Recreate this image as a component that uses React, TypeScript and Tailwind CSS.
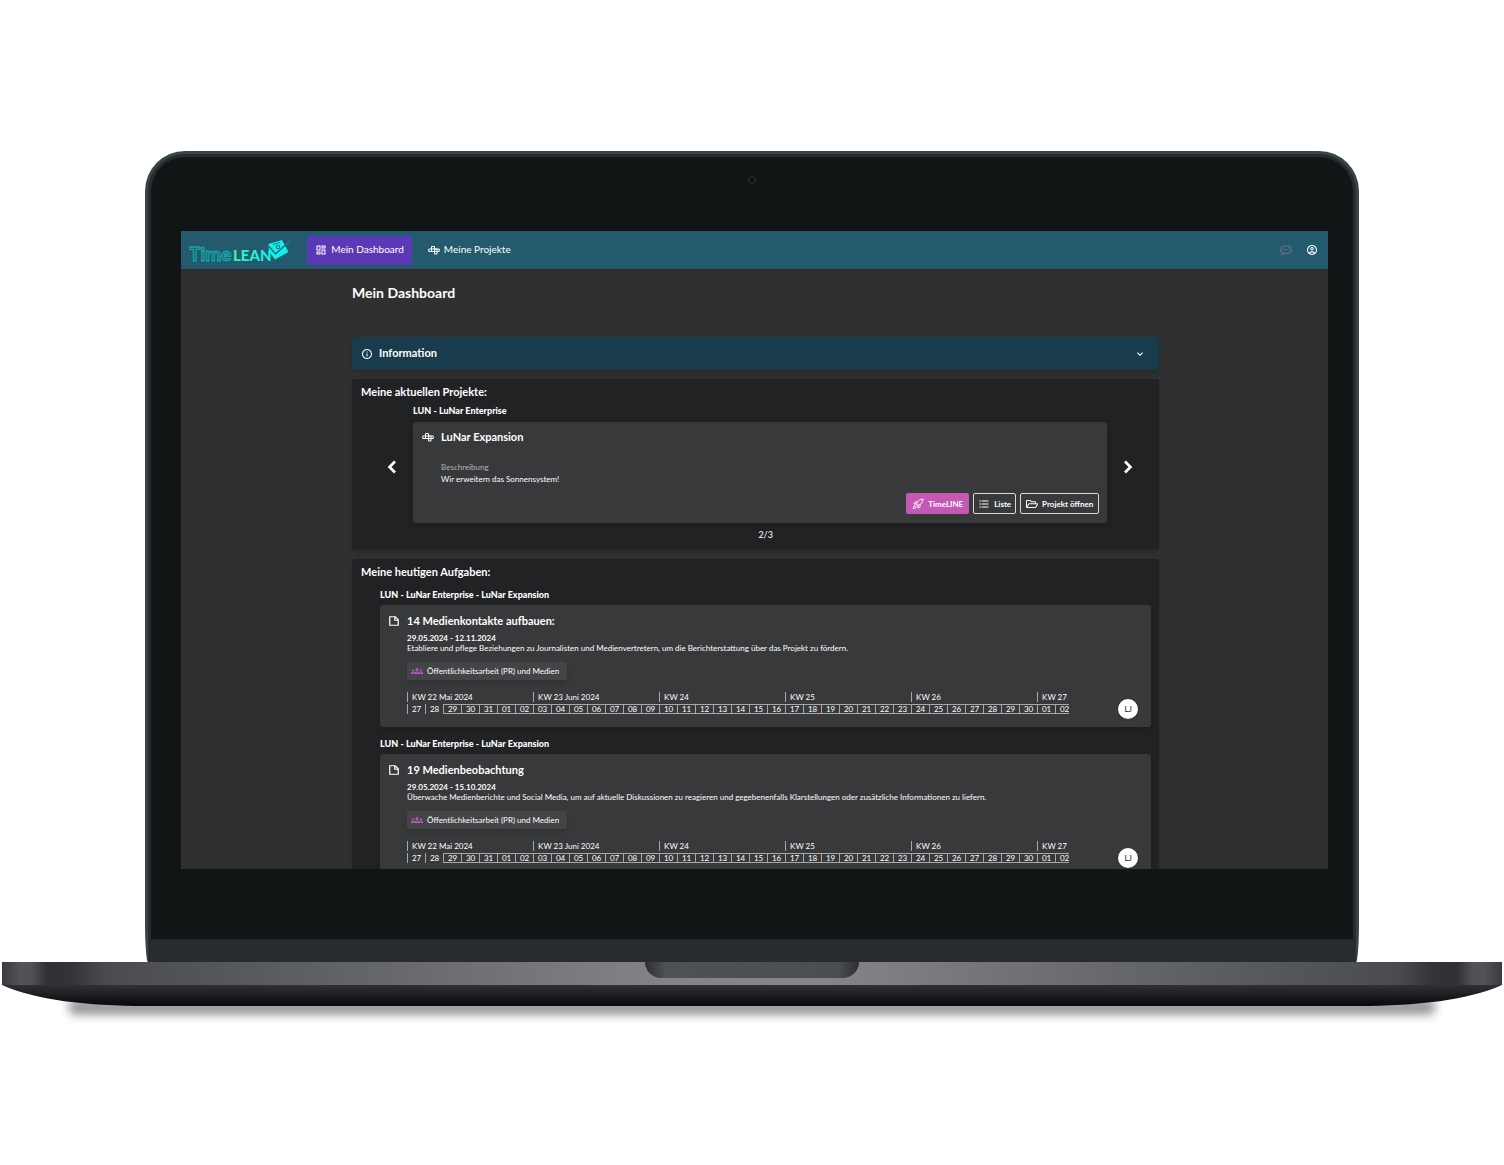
import { ReactNode, useState } from "react";
import { LuRocket } from "react-icons/lu";
import { FaRegFolderOpen } from "react-icons/fa";
import {
    MdFormatListBulleted,
    MdInfoOutline,
    MdKeyboardArrowDown,
    MdOutlineAccountCircle,
    MdOutlineDashboard,
    MdOutlineGroups,
} from "react-icons/md";

type Task = {
    title: string;
    period: string;
    description: string;
    team: string;
};

const tasks: Task[] = [
    {
        title: "14 Medienkontakte aufbauen:",
        period: "29.05.2024 - 12.11.2024",
        description:
            "Etabliere und pflege Beziehungen zu Journalisten und Medienvertretern, um die Berichterstattung über das Projekt zu fördern.",
        team: "Öffentlichkeitsarbeit (PR) und Medien",
    },
    {
        title: "19 Medienbeobachtung",
        period: "29.05.2024 - 15.10.2024",
        description:
            "Überwache Medienberichte und Social Media, um auf aktuelle Diskussionen zu reagieren und gegebenenfalls Klarstellungen oder zusätzliche Informationen zu liefern.",
        team: "Öffentlichkeitsarbeit (PR) und Medien",
    },
];

const weeks = [
    { label: "KW 22 Mai 2024", days: 7 },
    { label: "KW 23 Juni 2024", days: 7 },
    { label: "KW 24", days: 7 },
    { label: "KW 25", days: 7 },
    { label: "KW 26", days: 7 },
    { label: "KW 27", days: 2 },
];

const pad = (n: number) => String(n).padStart(2, "0");

// 27. Mai bis 2. Juli
const days = [
    ...[27, 28, 29, 30, 31].map(pad),
    ...Array.from({ length: 30 }, (_, i) => pad(i + 1)),
    "01",
    "02",
];

const ProjectIcon = () => (
    <svg viewBox="0 0 24 20" className="h-[10px] w-3 shrink-0" fill="none" stroke="currentColor" strokeWidth="2">
        <path d="M7 3h6v10H7zM1.500 8h21v5h-21zM13 8h5v10h-5z" />
    </svg>
);

const TaskIcon = () => (
    <svg viewBox="0 0 20 20" className="h-[10px] w-[10px] shrink-0" fill="none" stroke="currentColor" strokeWidth="2.4">
        <path d="M1.500 1.500h11l6 6v11h-17zM11.500 1.500v7h7" />
    </svg>
);

const MessageIcon = () => (
    <svg viewBox="0 0 24 24" className="h-3 w-3" fill="none" stroke="currentColor" strokeWidth="2.4">
        <path d="M5 17.500C2.500 16 1.500 14 1.500 11.500 1.500 7 6 4 12 4s10.500 3 10.500 7.500S18 19 12 19c-1 0-2-.1-3-.3L3.500 21z" />
        <path d="M6.500 11.500h2.500M10.800 11.500h2.500M15 11.500h2.500" />
    </svg>
);

const Chevron = ({ d }: { d: string }) => (
    <svg viewBox="0 0 16 16" className="h-4 w-4" fill="none" stroke="currentColor" strokeWidth="2.6">
        <path d={d} />
    </svg>
);

const Logo = () => (
    <svg viewBox="0 0 102 26" className="h-[26px] w-[102px]" role="img" aria-label="TimeLEAN">
        <defs>
            <linearGradient id="lean" x1="0" x2="1">
                <stop offset="0" stopColor="#3df0b0" />
                <stop offset="1" stopColor="#0ff0ee" />
            </linearGradient>
        </defs>
        <text x="0" y="23" fontFamily="Lato, sans-serif" fontSize="19" fontWeight="900" fill="#1b7280" stroke="#15b5b0" strokeWidth="0.8">
            Time
        </text>
        <text x="44" y="23" fontFamily="Lato, sans-serif" fontSize="15" fontWeight="900" fill="url(#lean)">
            LEAN
        </text>
        <path d="M79.500 6L93 2l6.500 12L86 21.500l-6-8z" fill="#0ff0ee" />
        <path d="M80 8.500l6.500 7.500L96 7.500" fill="none" stroke="#235a6e" strokeWidth="1.2" />
        <path d="M84 6.500l7-2.200" stroke="#235a6e" strokeWidth="0.8" />
        <circle cx="89" cy="9" r="1.8" fill="none" stroke="#235a6e" />
        <path d="M97 7l4.500-5" stroke="#2b8c98" strokeWidth="1" />
    </svg>
);

const NavBar = () => (
    <nav className="flex h-[38px] items-start bg-[#235a6e] pl-2 pr-[10px] text-[10px] text-white shadow">
        <a href="#" className="mt-[7px]">
            <Logo />
        </a>
        <a href="#dashboard" className="ml-4 mt-[5px] flex h-[29px] items-center gap-1 rounded-[3px] bg-[#5b39b6] px-2 pb-[2px]">
            <MdOutlineDashboard className="h-3 w-3" />
            Mein Dashboard
        </a>
        <a href="#projekte" className="ml-2 mt-[5px] flex h-[29px] items-center gap-1 px-2 pb-[2px]">
            <ProjectIcon />
            Meine Projekte
        </a>
        <div className="ml-auto mt-[13px] flex gap-[14px]">
            <button aria-label="Nachrichten" className="text-[#66747b]">
                <MessageIcon />
            </button>
            <button aria-label="Konto">
                <MdOutlineAccountCircle className="h-3 w-3" />
            </button>
        </div>
    </nav>
);

const Panel = ({ title, children }: { title: string; children: ReactNode }) => (
    <section className="rounded-[3px] bg-[#212224] pt-[6px] shadow-md">
        <h2 className="pl-[9px] text-[11px] font-bold leading-[14px]">{title}</h2>
        {children}
    </section>
);

const Projects = () => {
    const [page, setPage] = useState(2);

    return (
        <Panel title="Meine aktuellen Projekte:">
            <div className="mt-[6px] flex items-center gap-[13px] pl-8 pr-[23px]">
                <button aria-label="Zurück" onClick={() => setPage(Math.max(1, page - 1))}>
                    <Chevron d="M11 2.500L5.500 8l5.500 5.500" />
                </button>
                <div className="flex-1 pb-[6px]">
                    <h3 className="mb-[5px] text-[9px] font-black leading-3">LUN - LuNar Enterprise</h3>
                    <div className="rounded-[3px] bg-[#38393b] pb-[9px] pl-[9px] pr-2 pt-2 shadow-md">
                        <div className="flex items-center gap-[7px]">
                            <ProjectIcon />
                            <h4 className="text-[11px] font-bold leading-[14px]">LuNar Expansion</h4>
                        </div>
                        <div className="mt-[17px] pl-[19px] text-[8px] leading-3">
                            <p className="text-[#b4b4b5]">Beschreibung</p>
                            <p>Wir erweitern das Sonnensystem!</p>
                        </div>
                        <div className="mt-2 flex justify-end gap-1 text-[8px] font-bold">
                            <button className="flex h-[21px] items-center gap-1 rounded-[2px] bg-[#c557b5] px-[6px]">
                                <LuRocket className="h-3 w-3" />
                                TimeLINE
                            </button>
                            <button className="flex h-[21px] items-center gap-1 rounded-[2px] border border-[#d8d8d8] px-1">
                                <MdFormatListBulleted className="h-3 w-3" />
                                Liste
                            </button>
                            <button className="flex h-[21px] items-center gap-1 rounded-[2px] border border-[#d8d8d8] px-[5px]">
                                <FaRegFolderOpen className="h-3 w-3" />
                                Projekt öffnen
                            </button>
                        </div>
                    </div>
                </div>
                <button aria-label="Weiter" onClick={() => setPage(Math.min(3, page + 1))}>
                    <Chevron d="M5 2.500L10.500 8 5 13.500" />
                </button>
            </div>
            <p className="pb-[9px] pl-5 text-center text-[9px] leading-3">{page}/3</p>
        </Panel>
    );
};

const Timeline = () => (
    <div className="mb-[5px] flex-1 overflow-hidden">
        <table className="w-[666px] table-fixed border-separate border-spacing-0">
            <thead>
                <tr>
                    {weeks.map((week) => (
                        <th key={week.label} colSpan={week.days} className="p-0 pb-[2px] text-left text-[8px] font-normal leading-[10px]">
                            <span className="block whitespace-nowrap border-l border-[#a8a8a9] pl-1">{week.label}</span>
                        </th>
                    ))}
                </tr>
            </thead>
            <tbody>
                <tr>
                    {days.map((day, i) => (
                        <td
                            key={i}
                            className={
                                "h-[10px] border-l border-[#a8a8a9] p-0 text-center text-[8px] leading-[8px] " +
                                (i > 1 ? "border-y" : "")
                            }
                        >
                            {day}
                        </td>
                    ))}
                </tr>
            </tbody>
        </table>
    </div>
);

const TaskCard = ({ task }: { task: Task }) => (
    <article className="pl-7 pr-2">
        <h3 className="mb-1 text-[9px] font-black leading-3">LUN - LuNar Enterprise - LuNar Expansion</h3>
        <div className="rounded-[3px] bg-[#38393b] pb-2 pl-[9px] pr-[13px] pt-[9px] shadow-md">
            <div className="flex items-center gap-2">
                <TaskIcon />
                <h4 className="text-[11px] font-bold leading-[14px]">{task.title}</h4>
            </div>
            <div className="mt-[5px] pl-[18px] text-[8px] leading-[10px]">
                <p className="font-bold">{task.period}</p>
                <p>{task.description}</p>
                <div className="mt-[9px] flex h-[18px] w-fit items-center gap-1 rounded-[2px] bg-[#434446] pl-1 pr-2 shadow-md">
                    <MdOutlineGroups className="h-3 w-3 text-[#c557d5]" />
                    {task.team}
                </div>
                <div className="mt-3 flex items-end gap-[49px]">
                    <Timeline />
                    <span className="flex h-5 w-5 items-center justify-center rounded-full bg-white text-[8px] text-[#222] shadow">LJ</span>
                </div>
            </div>
        </div>
    </article>
);

const Dashboard = () => (
    <main className="ml-[14.9%] mr-[14.7%] pt-4 text-white">
        <h1 className="text-[14px] font-bold leading-4">Mein Dashboard</h1>
        <div className="mt-9 flex flex-col gap-[9px]">
            <button className="flex h-[33px] items-center gap-[6px] rounded-[3px] bg-[#193c4d] pl-[9px] pr-[13px] text-[11px] font-bold shadow-md">
                <MdInfoOutline className="h-3 w-3" />
                Information
                <MdKeyboardArrowDown className="ml-auto h-3 w-3" />
            </button>
            <Projects />
            <Panel title="Meine heutigen Aufgaben:">
                <div className="mt-[10px] flex flex-col gap-[11px] pb-3">
                    {tasks.map((task) => (
                        <TaskCard key={task.title} task={task} />
                    ))}
                </div>
            </Panel>
        </div>
    </main>
);

const Laptop = ({ children }: { children: ReactNode }) => (
    <div className="px-[2px]">
        <div className="mx-auto w-[80.9%] overflow-hidden rounded-t-[40px] rounded-b-[3px_40px] border-x-3 border-t-3 border-[#3a4347] bg-[#272c2f]">
            <div className="mx-[3px] mt-[3px] rounded-t-[34px] bg-[#111516] pb-[70px]">
                <div className="flex h-[74px] justify-center pt-[19px]">
                    <span className="h-2 w-2 rounded-full border border-[#2c3235]" />
                </div>
                <div className="ml-[30px] mr-[25px] aspect-[1147/638] overflow-hidden bg-[#303030]">{children}</div>
            </div>
            <div className="h-[23px] border-t border-[#202527]" />
        </div>
        <div className="relative">
            <div className="absolute inset-x-[66px] bottom-[-9px] h-4 rounded-full bg-black/40 blur-[5px]" />
            <div className="relative flex h-[23px] justify-center bg-linear-[90deg,#3a3b3e_0%,#525356_1.2%,#505154_2%,#303134_3%,#323336_4.5%,#4b4c4f_7%,#56575a_15%,#858589_45%,#858589_55%,#56575a_85%,#4b4c4f_93%,#323336_95.5%,#303134_97%,#505154_98%,#525356_98.8%,#3a3b3e_100%]">
                <div className="h-4 w-[214px] rounded-b-[16px] bg-linear-[90deg,#2f3032,#505155_10%,#4d4e52_90%,#2f3032]" />
            </div>
            <svg viewBox="0 0 1500 21" preserveAspectRatio="none" className="relative block h-[21px] w-full">
                <defs>
                    <linearGradient id="underside" x1="0" x2="0" y1="0" y2="1">
                        <stop offset="0" stopColor="#303136" />
                        <stop offset="1" stopColor="#08080b" />
                    </linearGradient>
                </defs>
                <path d="M0 0H1500C1467 15 1415 21 1355 21H145C85 21 33 15 0 0z" fill="url(#underside)" />
            </svg>
        </div>
    </div>
);

const App = () => {
    return (
        <div className="min-h-screen bg-white pt-[151px] font-['Lato',sans-serif]">
            <Laptop>
                <NavBar />
                <Dashboard />
            </Laptop>
        </div>
    );
};

export default App;
